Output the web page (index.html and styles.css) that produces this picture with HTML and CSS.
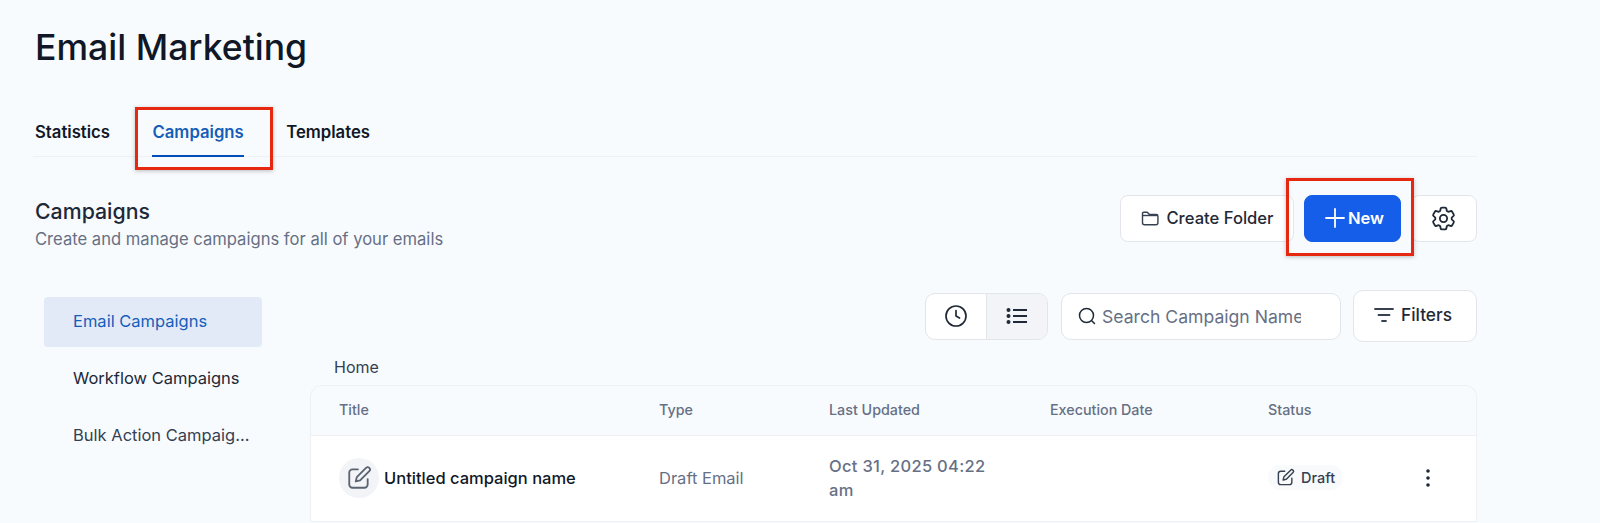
FILE: index.html
```html
<!DOCTYPE html>
<html lang="en">
<head>
    <meta charset="UTF-8">
    <meta name="viewport" content="width=device-width, initial-scale=1.0">
    <title>Email Marketing</title>
    <link rel="stylesheet" href="styles.css">
</head>
<body>

<div class="page">
    <h1 class="page-title">Email Marketing</h1>

    <div class="tabs">
        <div class="tab">Statistics</div>
        <div class="tab tab-active">Campaigns</div>
        <div class="tab">Templates</div>
    </div>

    <div class="section-head">
        <div>
            <h2 class="section-title">Campaigns</h2>
            <p class="section-sub">Create and manage campaigns for all of your emails</p>
        </div>
        <div class="actions">
            <button class="btn btn-folder" type="button">
                <svg width="20" height="20" viewBox="0 0 24 24" fill="none" stroke="#374151" stroke-width="1.7" stroke-linejoin="round"><path d="M3 6.5A1.5 1.5 0 0 1 4.5 5h4.2l2.3 2.6h8.500A2 2 0 0 1 21.500 9.600v8A2.400 2.400 0 0 1 19.100 20H5.400A2.400 2.400 0 0 1 3 17.600z"/><path d="M3 9h18"/></svg>
                Create Folder
            </button>
            <button class="btn btn-new" type="button">
                <svg width="22" height="22" viewBox="0 0 22 22" fill="none" stroke="#fff" stroke-width="1.8" stroke-linecap="round"><path d="M11 2v18M2 11h18"/></svg>
                New
            </button>
            <button class="btn btn-gear" type="button">
                <svg width="29" height="29" viewBox="0 0 24 24" fill="none" stroke="#1f2937" stroke-width="1.5" stroke-linecap="round" stroke-linejoin="round"><path d="M9.594 3.940c.090-.542.560-.940 1.110-.940h2.593c.550 0 1.020.398 1.110.940l.213 1.281c.063.374.313.686.645.870.074.040.147.083.220.127.325.196.720.257 1.075.124l1.217-.456a1.125 1.125 0 0 1 1.370.490l1.296 2.247a1.125 1.125 0 0 1-.260 1.431l-1.003.827c-.293.241-.438.613-.430.992a7.723 7.723 0 0 1 0 .255c-.008.378.137.750.430.991l1.004.827c.424.350.534.955.260 1.430l-1.298 2.247a1.125 1.125 0 0 1-1.369.491l-1.217-.456c-.355-.133-.750-.072-1.076.124a6.470 6.470 0 0 1-.220.128c-.331.183-.581.495-.644.869l-.213 1.281c-.090.543-.560.940-1.110.940h-2.594c-.550 0-1.019-.398-1.110-.940l-.213-1.281c-.062-.374-.312-.686-.644-.870a6.520 6.520 0 0 1-.220-.127c-.325-.196-.720-.257-1.076-.124l-1.217.456a1.125 1.125 0 0 1-1.369-.490l-1.297-2.247a1.125 1.125 0 0 1 .260-1.431l1.004-.827c.292-.240.437-.613.430-.991a6.932 6.932 0 0 1 0-.255c.007-.380-.138-.751-.430-.992l-1.004-.827a1.125 1.125 0 0 1-.260-1.430l1.297-2.247a1.125 1.125 0 0 1 1.370-.491l1.216.456c.356.133.751.072 1.076-.124.072-.044.146-.086.220-.128.332-.183.582-.495.644-.869l.214-1.280z"/><circle cx="12" cy="12" r="3"/></svg>
            </button>
        </div>
    </div>

    <div class="content">
        <div class="side-menu">
            <div class="side-item side-active">Email Campaigns</div>
            <div class="side-item">Workflow Campaigns</div>
            <div class="side-item side-muted">Bulk Action Campaigns</div>
        </div>

        <div class="main">
            <div class="toolbar">
                <div class="view-toggle">
                    <div class="view-btn">
                        <svg width="24" height="24" viewBox="0 0 24 24" fill="none" stroke="#1f2937" stroke-width="1.7" stroke-linecap="round" stroke-linejoin="round"><circle cx="12" cy="12" r="10"/><path d="M12 6.500V12l3.500 2"/></svg>
                    </div>
                    <div class="view-btn view-active">
                        <svg width="22" height="22" viewBox="0 0 22 22" fill="none" stroke="#1f2937" stroke-width="2.2"><path d="M7 5h14M7 11h14M7 17h14"/><circle cx="2.500" cy="5" r="2" fill="#1f2937" stroke="none"/><circle cx="2.500" cy="11" r="2" fill="#1f2937" stroke="none"/><circle cx="2.500" cy="17" r="2" fill="#1f2937" stroke="none"/></svg>
                    </div>
                </div>
                <div class="search">
                    <svg width="20" height="20" viewBox="0 0 20 20" fill="none" stroke="#1f2937" stroke-width="1.500" stroke-linecap="round"><circle cx="9.500" cy="9.500" r="7"/><path d="M15 15l2.500 2.500"/></svg>
                    <input class="search-input" type="text" placeholder="Search Campaign Name">
                </div>
                <button class="btn btn-filters" type="button">
                    <svg width="22" height="22" viewBox="0 0 22 22" fill="none" stroke="#374151" stroke-width="1.800" stroke-linecap="round"><path d="M2 5h18M5.500 11h11M9 17h4"/></svg>
                    Filters
                </button>
            </div>

            <div class="crumb">Home</div>

            <div class="table">
                <div class="row row-head">
                    <div>Title</div>
                    <div>Type</div>
                    <div>Last Updated</div>
                    <div>Execution Date</div>
                    <div>Status</div>
                    <div></div>
                </div>
                <div class="row row-body">
                    <div class="cell-title">
                        <span class="title-icon">
                            <svg width="26" height="26" viewBox="0 0 24 24" fill="none" stroke="#5b6472" stroke-width="1.700" stroke-linecap="round" stroke-linejoin="round"><path d="M11 4H6a3 3 0 0 0-3 3v11a3 3 0 0 0 3 3h11a3 3 0 0 0 3-3v-5"/><path d="M18.500 2.700a2.100 2.100 0 0 1 3 3L13 14.200l-4 1 1-4z"/></svg>
                        </span>
                        Untitled campaign name
                    </div>
                    <div class="cell-type">Draft Email</div>
                    <div class="cell-date">Oct 31, 2025 04:22 am</div>
                    <div></div>
                    <div>
                        <span class="badge">
                            <svg width="19" height="19" viewBox="0 0 24 24" fill="none" stroke="#374151" stroke-width="1.800" stroke-linecap="round" stroke-linejoin="round"><path d="M11 4H6a3 3 0 0 0-3 3v11a3 3 0 0 0 3 3h11a3 3 0 0 0 3-3v-5"/><path d="M18.500 2.700a2.100 2.100 0 0 1 3 3L13 14.200l-4 1 1-4z"/></svg>
                            Draft
                        </span>
                    </div>
                    <div class="cell-more">
                        <svg width="6" height="20" viewBox="0 0 6 20" fill="#1f2937"><circle cx="3" cy="3" r="1.800"/><circle cx="3" cy="10" r="1.800"/><circle cx="3" cy="17" r="1.800"/></svg>
                    </div>
                </div>
            </div>
        </div>
    </div>

    <!-- red annotation boxes -->
    <div class="mark mark-tab"></div>
    <div class="mark mark-new"></div>
</div>

</body>
</html>
```

FILE: styles.css
```css
html, body {
    margin: 0;
    height: 523px;
    overflow: hidden;
}
body {
    font-family: "Inter", "Liberation Sans", sans-serif;
    background-color: #f8fbfd;
    color: #101828;
}
.page {
    position: relative;
    padding: 26px 123px 0 35px;
}
.page-title {
    margin: 0;
    font-size: 35.6px;
    line-height: 44px;
    font-weight: 500;
}

/* tabs */
.tabs {
    display: flex;
    gap: 42.5px;
    margin: 36px 0 0 -2px;
    padding-left: 2px;
    height: 50px;
    border-bottom: 1px solid #eef0f3;
}
.tab {
    font-size: 16.7px;
    font-weight: 600;
    line-height: 22px;
    padding-top: 15px;
    box-sizing: border-box;
    height: 51px;
    color: #101828;
}
.tab-active {
    color: #155eb8;
    border-bottom: 2px solid #004eba;
}

/* section header */
.section-head {
    display: flex;
    justify-content: space-between;
    margin-top: 40px;
}
.section-title {
    margin: 0;
    font-size: 21.3px;
    line-height: 28px;
    font-weight: 500;
    color: #1d2939;
}
.section-sub {
    margin: 2px 0 0;
    font-size: 16.6px;
    line-height: 24px;
    color: #667085;
}
.actions {
    display: flex;
    gap: 10px;
    margin-top: -2px;
}
.btn {
    display: flex;
    align-items: center;
    justify-content: center;
    height: 47px;
    box-sizing: border-box;
    background-color: #fff;
    border: 1px solid #e2e5ea;
    border-radius: 8px;
    font-family: inherit;
    font-size: 16.6px;
    font-weight: 500;
    color: #1f2937;
    padding: 0 0 2px;
}
.btn-folder {
    width: 174px;
    gap: 6px;
}
.btn-new {
    width: 97px;
    gap: 2px;
    padding-left: 3px;
    background-color: #155eea;
    border-color: #155eea;
    color: #fff;
    font-weight: 600;
}
.btn-gear {
    width: 66px;
    padding: 0 2px 0 0;
}

/* sidebar + list */
.content {
    display: flex;
    margin-top: 39px;
}
.side-menu {
    width: 218px;
    margin: 0 48px 0 9px;
    padding-top: 7px;
    flex-shrink: 0;
}
.side-item {
    height: 50px;
    margin-bottom: 7px;
    padding: 0 12px 0 29px;
    border-radius: 4px;
    line-height: 48px;
    font-size: 16.5px;
    color: #1d2939;
    white-space: nowrap;
    overflow: hidden;
    text-overflow: ellipsis;
}
.side-active {
    background-color: #e2eaf8;
    color: #155eb8;
}
.side-muted {
    color: #344054;
}
.main {
    flex: 1;
}
.toolbar {
    display: flex;
    justify-content: flex-end;
    align-items: center;
    gap: 12px;
    height: 52px;
}
.view-toggle {
    display: flex;
    height: 47px;
    box-sizing: border-box;
    margin-right: 1px;
    border: 1px solid #e2e5ea;
    border-radius: 10px;
    overflow: hidden;
    background-color: #fff;
}
.view-btn {
    width: 60px;
    display: flex;
    align-items: center;
    justify-content: center;
}
.view-active {
    background-color: #f2f4f7;
    border-left: 1px solid #e2e5ea;
}
.search {
    display: flex;
    align-items: center;
    gap: 5px;
    width: 280px;
    height: 47px;
    box-sizing: border-box;
    padding: 0 39px 0 15px;
    background-color: #fff;
    border: 1px solid #e2e5ea;
    border-radius: 10px;
}
.search-input {
    flex: 1;
    min-width: 0;
    border: none;
    outline: none;
    padding: 0;
    background: none;
    font-family: inherit;
    font-size: 17.6px;
}
.search-input::placeholder {
    color: #667085;
    opacity: 1;
}
.btn-filters {
    width: 124px;
    height: 52px;
    gap: 6px;
    padding: 0 5px 3px 0;
    border-radius: 10px;
    font-size: 17.3px;
}
.crumb {
    margin: 14px 0 7px 24px;
    font-size: 16px;
    line-height: 22px;
    color: #344054;
}

/* table */
.table {
    border: 1px solid #eef0f3;
    border-bottom: none;
    border-radius: 12px 12px 0 0;
    overflow: hidden;
}
.row {
    display: grid;
    grid-template-columns: 320px 170px 221px 218px 150px 1fr;
    align-items: center;
    padding-left: 28px;
}
.row-head {
    height: 47px;
    padding-bottom: 2px;
    font-size: 14.3px;
    font-weight: 500;
    color: #667085;
    border-bottom: 1px solid #eef0f3;
}
.row-body {
    height: 83px;
    padding-bottom: 2px;
    background-color: #fff;
    border-bottom: 1px solid #eef0f3;
    font-size: 16.5px;
}
.cell-title {
    display: flex;
    align-items: center;
    gap: 5px;
    font-weight: 500;
    color: #101828;
}
.title-icon {
    display: flex;
    align-items: center;
    justify-content: center;
    width: 40px;
    height: 40px;
    border-radius: 50%;
    background-color: #f2f4f7;
}
.cell-type {
    color: #667085;
}
.cell-date {
    width: 170px;
    font-weight: 500;
    line-height: 24px;
    color: #667085;
    letter-spacing: 0.3px;
}
.badge {
    display: inline-flex;
    align-items: center;
    gap: 6px;
    height: 25px;
    padding: 0 8px;
    border-radius: 13px;
    background-color: #f9fafb;
    font-size: 14.5px;
    font-weight: 500;
    color: #344054;
}
.cell-more {
    display: flex;
    padding-left: 7px;
}

/* red annotation boxes */
.mark {
    position: absolute;
    box-sizing: border-box;
    border: 3px solid #e5280f;
    box-shadow: 0 1px 4px rgba(0, 0, 0, 0.25);
}
.mark-tab {
    left: 135px;
    top: 107px;
    width: 138px;
    height: 63px;
}
.mark-new {
    left: 1286px;
    top: 178px;
    width: 128px;
    height: 78px;
}
```
